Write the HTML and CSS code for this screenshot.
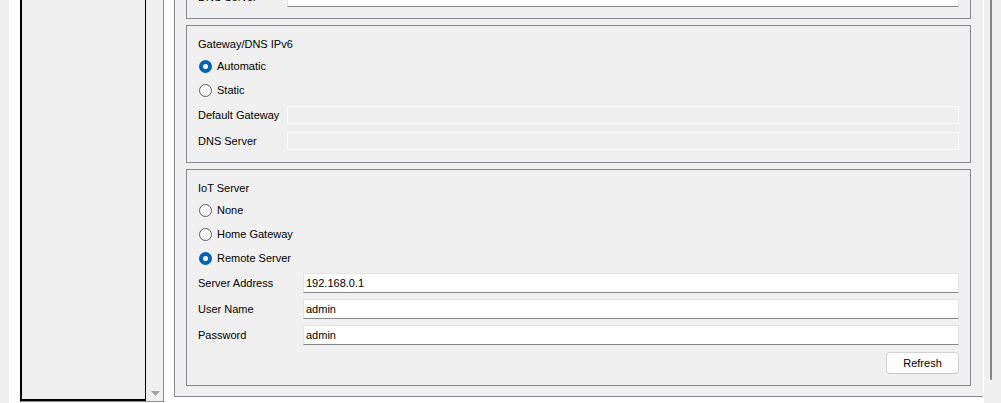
FILE: index.html
```html
<!DOCTYPE html>
<html lang="en">
<head>
<meta charset="utf-8">
<title>Config</title>
<link rel="stylesheet" href="styles.css">
</head>
<body>
<div class="window">
  <div class="client">
    <div class="sidebar">
      <div class="list"></div>
      <div class="list-scroll">
        <svg class="arrow-down" width="9" height="5" viewBox="0 0 9 5"><polygon points="0,0 9,0 4.5,5" fill="#a3a3a3"/></svg>
      </div>
    </div>
    <div class="config">
      <div class="group">
        <div class="group-title">Gateway/DNS IPv4</div>
        <div class="radio-row"><span class="radio"></span><span>DHCP</span></div>
        <div class="radio-row"><span class="radio checked"></span><span>Static</span></div>
        <div class="field-row"><span>Default Gateway</span><input class="input" type="text" value=""></div>
        <div class="field-row"><span>DNS Server</span><input class="input" type="text" value=""></div>
      </div>
      <div class="group">
        <div class="group-title">Gateway/DNS IPv6</div>
        <div class="radio-row"><span class="radio checked"></span><span>Automatic</span></div>
        <div class="radio-row"><span class="radio"></span><span>Static</span></div>
        <div class="field-row"><span>Default Gateway</span><input class="input disabled" type="text" value="" disabled></div>
        <div class="field-row"><span>DNS Server</span><input class="input disabled" type="text" value="" disabled></div>
      </div>
      <div class="group group-iot">
        <div class="group-title">IoT Server</div>
        <div class="radio-row"><span class="radio"></span><span>None</span></div>
        <div class="radio-row"><span class="radio"></span><span>Home Gateway</span></div>
        <div class="radio-row"><span class="radio checked"></span><span>Remote Server</span></div>
        <div class="field-row"><span>Server Address</span><input class="input" type="text" value="192.168.0.1"></div>
        <div class="field-row"><span>User Name</span><input class="input" type="text" value="admin"></div>
        <div class="field-row"><span>Password</span><input class="input" type="text" value="admin"></div>
        <div class="button-row"><button class="button" type="button">Refresh</button></div>
      </div>
    </div>
  </div>
  <div class="vscroll"><div class="thumb"></div></div>
</div>
</body>
</html>
```

FILE: styles.css
```css
* { box-sizing: border-box; }

html, body {
  margin: 0;
  padding: 0;
  background: #f0f0f0;
  overflow: hidden;
}

body {
  font-family: "Liberation Sans", Arial, sans-serif;
  font-size: 11px;
  color: #000;
}

.window {
  display: flex;
  height: 403px;
  padding-left: 9px;
  overflow: hidden;
}

.client {
  width: 975px;
  height: 403px;
  flex-shrink: 0;
  background: #fff;
  display: flex;
  align-items: flex-start;
  padding-left: 11px;
  gap: 10px;
  overflow: hidden;
}

.sidebar {
  width: 144px;
  height: 412px;
  margin-top: -10px;
  flex-shrink: 0;
  display: flex;
  background: #f0f0f0;
  border: 1px solid #8c8c8c;
  border-left-color: #000;
}

.list {
  width: 125px;
  height: 100%;
  border: 1px solid #000;
  border-bottom-width: 2px;
  background: #f0f0f0;
}

.list-scroll {
  width: 17px;
  display: flex;
  flex-direction: column;
  justify-content: flex-end;
  align-items: center;
  padding-bottom: 5px;
  padding-left: 1px;
}

.arrow-down { display: block; }

.config {
  width: 809px;
  flex-shrink: 0;
  margin-top: -130px;
  background: #f0f0f0;
  border-top: 1px solid #85878c;
  border-left: 1px solid #85878c;
  border-bottom: 1px solid #85878c;
  padding: 10px 12px 10px 11px;
  display: flex;
  flex-direction: column;
  gap: 6px;
}

.group {
  border: 1px solid #85878c;
  padding: 11px 11px 8px 11px;
}

.group-title {
  height: 14px;
  line-height: 14px;
  margin-bottom: 3px;
}

.radio-row {
  height: 24px;
  display: flex;
  align-items: center;
}

.radio {
  width: 13px;
  height: 13px;
  border-radius: 50%;
  margin-left: 1px;
  margin-right: 5px;
  border: 1px solid #5f5f5f;
  background: #f6f6f6;
  flex-shrink: 0;
}

.radio.checked {
  border: 4px solid #0063b8;
  background: #fff;
}

.field-row {
  height: 26px;
  display: grid;
  grid-template-columns: 89px 1fr;
  align-items: center;
}

.group-iot .field-row {
  grid-template-columns: 105px 1fr;
}

.input {
  display: block;
  width: 100%;
  height: 20px;
  margin: 0;
  padding: 0 2px;
  font-family: "Liberation Sans", Arial, sans-serif;
  font-size: 11px;
  color: #000;
  background: #fff;
  border: 1px solid #e4e4e4;
  border-bottom-color: #868686;
  border-radius: 0;
  outline: none;
}

.input.disabled {
  height: 18px;
  background: #f0f0f0;
  border: 1px solid #fafafa;
}

.button-row {
  display: flex;
  justify-content: flex-end;
  margin-top: 4px;
  margin-bottom: 3px;
}

.button {
  width: 73px;
  height: 22px;
  margin: 0;
  padding: 0;
  font-family: "Liberation Sans", Arial, sans-serif;
  font-size: 11px;
  color: #000;
  background: #fdfdfd;
  border: 1px solid #d3d3d3;
  border-bottom-color: #c4c4c4;
  border-radius: 4px;
}

.vscroll {
  width: 17px;
  flex-shrink: 0;
  background: #f0f0f0;
}

.thumb {
  width: 2px;
  height: 390px;
  margin-top: -10px;
  margin-left: 6px;
  background: #858585;
  border-radius: 1px;
}
```
